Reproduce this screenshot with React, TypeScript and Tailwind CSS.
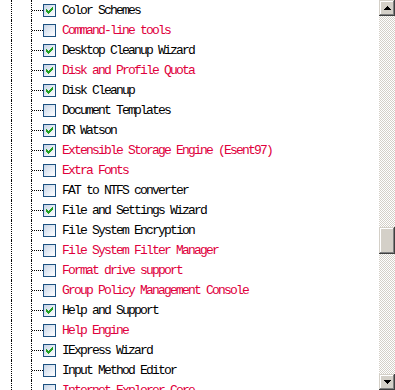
import React from 'react';

type Item = { name: string; checked: boolean; red?: boolean };

const items: Item[] = [
  { name: 'Color Schemes', checked: true },
  { name: 'Command-line tools', checked: false, red: true },
  { name: 'Desktop Cleanup Wizard', checked: true },
  { name: 'Disk and Profile Quota', checked: true, red: true },
  { name: 'Disk Cleanup', checked: true },
  { name: 'Document Templates', checked: false },
  { name: 'DR Watson', checked: true },
  { name: 'Extensible Storage Engine (Esent97)', checked: true, red: true },
  { name: 'Extra Fonts', checked: false, red: true },
  { name: 'FAT to NTFS converter', checked: false },
  { name: 'File and Settings Wizard', checked: true },
  { name: 'File System Encryption', checked: false },
  { name: 'File System Filter Manager', checked: false, red: true },
  { name: 'Format drive support', checked: false, red: true },
  { name: 'Group Policy Management Console', checked: false, red: true },
  { name: 'Help and Support', checked: true },
  { name: 'Help Engine', checked: false, red: true },
  { name: 'IExpress Wizard', checked: true },
  { name: 'Input Method Editor', checked: false },
  { name: 'Internet Explorer Core', checked: false, red: true },
];

// pixel check mark, XP style
const tick = [
  [6, 0], [5, 1], [6, 1], [0, 2], [4, 2], [5, 2], [6, 2],
  [0, 3], [1, 3], [3, 3], [4, 3], [5, 3],
  [0, 4], [1, 4], [2, 4], [3, 4], [4, 4],
  [1, 5], [2, 5], [3, 5], [2, 6],
];

const CheckBox = ({ checked }: { checked: boolean }) => (
  <div className="w-[13px] h-[13px] mt-[4px] shrink-0 border border-[#1c5180] bg-[linear-gradient(135deg,#c6d4e6_0%,#e6edf6_55%,#ffffff_100%)] flex items-center justify-center">
    {checked && (
      <svg width="7" height="7" viewBox="0 0 7 7" shapeRendering="crispEdges">
        {tick.map(([x, y]) => (
          <rect key={`${x}-${y}`} x={x} y={y} width="1" height="1" fill="#21a121" />
        ))}
      </svg>
    )}
  </div>
);

const Row = ({ item }: { item: Item }) => (
  <div className="flex h-[20px] shrink-0">
    <div className="w-[11px] shrink-0" />
    <div className="w-[20px] shrink-0 border-l border-dotted border-black" />
    <div className="w-[12px] shrink-0 border-l border-dotted border-black">
      <div className="mt-[10px] w-[11px] border-t border-dotted border-black" />
    </div>
    <CheckBox checked={item.checked} />
    <span
      className={`ml-[6px] mt-[1px] whitespace-nowrap leading-[20px] text-[13px] tracking-[-1.8px] font-['Liberation_Mono',monospace] ${
        item.red ? 'text-[#e0003c]' : 'text-black'
      }`}
    >
      {item.name}
    </span>
  </div>
);

const ArrowButton = ({ up }: { up?: boolean }) => (
  <div className="w-[16px] h-[16px] shrink-0 bg-[#d4d0c8] shadow-[inset_-1px_-1px_#404040,inset_1px_1px_#d4d0c8,inset_-2px_-2px_#808080,inset_2px_2px_#ffffff] flex items-center justify-center">
    <svg width="7" height="4" viewBox="0 0 7 4" shapeRendering="crispEdges">
      {up ? (
        <path d="M3 0h1v1h1v1h1v1h1v1H0V3h1V2h1V1h1z" fill="#000" />
      ) : (
        <path d="M0 0h7v1H6v1H5v1H4v1H3V3H2V2H1V1H0z" fill="#000" />
      )}
    </svg>
  </div>
);

export default function App() {
  return (
    <div className="w-[395px] h-[390px] flex bg-white overflow-hidden">
      <div className="flex-1 flex flex-col overflow-hidden">
        {items.map((item) => (
          <Row key={item.name} item={item} />
        ))}
      </div>
      <div className="w-[16px] shrink-0 flex flex-col">
        <ArrowButton up />
        <div className="flex-1 flex flex-col bg-[repeating-conic-gradient(#d4d0c8_0_25%,#ffffff_0_50%)] bg-[length:2px_2px]">
          <div className="h-[211px] shrink-0" />
          <div className="h-[27px] shrink-0 bg-[#d4d0c8] shadow-[inset_-1px_-1px_#404040,inset_1px_1px_#d4d0c8,inset_-2px_-2px_#808080,inset_2px_2px_#ffffff]" />
        </div>
        <ArrowButton />
      </div>
    </div>
  );
}
